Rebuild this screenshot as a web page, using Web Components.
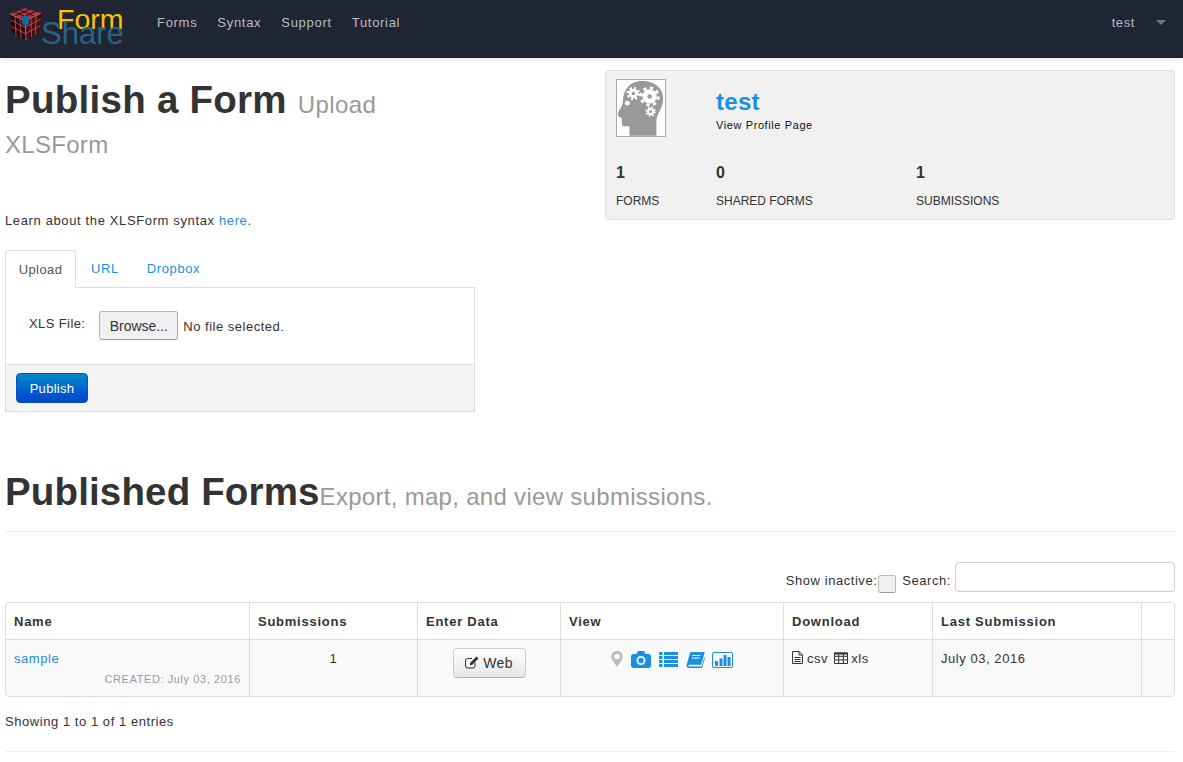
<!DOCTYPE html>
<html><head><meta charset="utf-8"><title>FormShare</title>
<style>
html,body{margin:0;padding:0;background:#fff;overflow:hidden}
body{font:13px/20px "Liberation Sans",Arial,sans-serif;color:#333;letter-spacing:.55px}
</style></head><body>
<fs-app></fs-app>
<script>
const base=`*{box-sizing:border-box}a{color:#1b8fe2;text-decoration:none}`;
function def(name,html){customElements.define(name,class extends HTMLElement{constructor(){super();this.attachShadow({mode:'open'}).innerHTML='<style>'+base+html[0]+'</style>'+html[1];}});}

def('fs-logo',[`:host{display:block;position:relative;width:125px;height:58px}
svg{position:absolute;left:8px;top:6px}
span{position:absolute;font-family:"Liberation Sans",Arial,sans-serif;letter-spacing:0;line-height:30px}
.f{left:57px;top:4px;font-size:28.5px;color:#f5c400}.s{left:41px;top:19px;font-size:31px;color:#2a6285}`,
`<svg width="35" height="36" viewBox="0 0 35 36">
<path d="M2 8 17 2 33 7 17 15Z" fill="#a5353d"/>
<path d="M2 8 17 15 18 34 4 27Z" fill="#2a070c"/>
<path d="M17 15 33 7 32 26 18 34Z" fill="#4a0e14"/>
<path d="M7 6 22 13M12 4 28 11M28 5 12 13M22 3 7 10" fill="none" stroke="#3a0c10" stroke-width="1"/>
<path d="M2.700 14 17.300 21.300 32.700 13M3.300 20.500 17.600 27.700 32.300 19.500M7 10 8 29.500M12 13 13 32M23 12 23.500 31M28 9.500 27.500 28.500" fill="none" stroke="#c4565c" stroke-width=".8"/>
<path d="M2 8 17 15 33 7M17 15 18 34" fill="none" stroke="#e08a8e" stroke-width=".7"/>
<rect x="14" y="10" width="7" height="9" rx="2" fill="#1a6a9c"/></svg>
<span class="f">Form</span><span class="s">Share</span>`]);

def('fs-navbar',[`:host{display:flex;align-items:flex-start;height:58px;background:#1f2533;box-shadow:0 1px 6px rgba(0,0,0,.12);position:relative}
nav{display:flex;gap:20px;margin-left:32px;flex:1;letter-spacing:.7px;padding-top:13px}
a{color:#b9bcc2}
.u{display:flex;align-items:center;gap:21px;margin-right:17px;color:#b9bcc2;letter-spacing:.6px;padding-top:13px}
i{display:block;border:5px solid transparent;border-top-color:#6f7480;border-bottom:0;margin-top:-2px}`,
`<fs-logo></fs-logo><nav><a href="#">Forms</a><a href="#">Syntax</a><a href="#">Support</a><a href="#">Tutorial</a></nav><div class="u"><span>test</span><i></i></div>`]);

def('fs-profile',[`:host{display:block;height:150px;background:#f1f1f1;border:1px solid #ddd;border-radius:4px;padding:8px 10px;margin-top:12px}
.top{display:flex;height:83px}
.av{width:50px;height:58px;background:#fff;border:1px solid #aaa;display:block}
.n{margin-left:50px;padding-top:9px}
.n a{display:block;font-size:24px;font-weight:bold;line-height:28px;letter-spacing:.3px}
.n span{display:block;font-size:11px;line-height:18px;color:#111;letter-spacing:.6px}
.st{display:grid;grid-template-columns:100px 200px 1fr}
b{display:block;font-size:16px;line-height:22px;margin-bottom:7px;letter-spacing:.4px}
small{font-size:12px;line-height:20px;letter-spacing:0;display:block}`,
`<div class="top"><svg class="av" viewBox="0 0 50 58"><path d="M1 34C3 30 6 27 6 22 7 8 15 1 26 1c12 0 22 6 22 19 0 9-6 14-7 22v16H13V48H8c-3 0-3-2-3-5 0-2 0-3-1-4L2 38C1 37 .5 35 1 34z" fill="#999"/>
<g fill="#fff"><circle cx="17" cy="14" r="4.800"/><circle cx="34" cy="17" r="7.500"/><circle cx="35" cy="32.700" r="3.800"/><circle cx="10.700" cy="24" r="2.500"/></g>
<g fill="none" stroke="#fff"><circle cx="17" cy="14" r="5.800" stroke-width="2.400" stroke-dasharray="2.300 2.250"/><circle cx="34" cy="17" r="9" stroke-width="3" stroke-dasharray="3.400 3.670"/><circle cx="35" cy="32.700" r="4.600" stroke-width="1.800" stroke-dasharray="1.800 1.810"/></g>
<g fill="#999"><circle cx="17" cy="14" r="1.800"/><circle cx="34" cy="17" r="2.300"/><circle cx="35" cy="32.700" r="1.600"/></g></svg>
<div class="n"><a href="#">test</a><span>View Profile Page</span></div></div>
<div class="st"><div><b>1</b><small>FORMS</small></div><div><b>0</b><small>SHARED FORMS</small></div><div><b>1</b><small>SUBMISSIONS</small></div></div>`]);

def('fs-upload',[`:host{display:block;width:470px}
.tabs{display:flex;height:38px;border-bottom:1px solid #ddd;letter-spacing:.6px}
.tabs a{padding:9px 12px;height:38px;margin-right:4px;line-height:20px}
.tabs a:first-child{color:#555;background:#fff;border:1px solid #ddd;border-bottom-color:#fff;border-radius:4px 4px 0 0;width:71px;text-align:center;padding:9px 0;margin-right:3px;letter-spacing:.4px}
.p{border:1px solid #ddd;border-top:0}
.f{height:76px;display:flex;align-items:flex-start;padding:23px 0 0 23px}
label{margin:3px 14px 0 0;letter-spacing:.4px}
.br{width:79px;height:29px;background:#f0f0f2;border:1px solid #b5b5b5;border-bottom-color:#999;border-right-color:#aaa;border-radius:3px;font:14px "Liberation Sans",Arial,sans-serif;letter-spacing:0;color:#333;padding:0;margin-right:5px}
.f span{margin-top:6px;letter-spacing:.5px}
.a{height:47px;background:#f5f5f5;border-top:1px solid #ddd;padding:8px 10px}
.pb{width:72px;height:30px;border:1px solid #0055bb;border-radius:4px;background:linear-gradient(#0088cc,#0044cc);color:#fff;font:13px "Liberation Sans",Arial,sans-serif;letter-spacing:.3px;padding:0}`,
`<div class="tabs"><a>Upload</a><a href="#">URL</a><a href="#">Dropbox</a></div>
<div class="p"><div class="f"><label>XLS File:</label><button class="br">Browse...</button><span>No file selected.</span></div><div class="a"><button class="pb">Publish</button></div></div>`]);

const ic={
marker:`<svg width="12" height="16" viewBox="0 0 12 16"><path fill-rule="evenodd" d="M6 0C2.700 0 .3 2.500.3 5.500c0 1.400.4 2.300 1 3.400L6 16l4.700-7.100c.6-1.100 1-2 1-3.400C11.700 2.500 9.300 0 6 0zm0 8.300a2.800 2.800 0 1 1 0-5.600 2.800 2.800 0 0 1 0 5.600z" fill="#bbb"/></svg>`,
cam:`<svg width="20" height="17" viewBox="0 0 20 17"><path fill-rule="evenodd" d="M2.500 3H5.500L6.500 .8C6.700.3 7.200 0 7.700 0h4.600c.5 0 1 .3 1.200.8L14.500 3h3C18.900 3 20 4.100 20 5.500v9c0 1.400-1.100 2.500-2.500 2.500h-15C1.100 17 0 15.900 0 14.500v-9C0 4.100 1.100 3 2.500 3zm7.500 11a4.500 4.500 0 1 0 0-9 4.500 4.500 0 0 0 0 9zm0-1.800a2.700 2.700 0 1 1 0-5.400 2.700 2.700 0 0 1 0 5.400z" fill="#1b8fe2"/></svg>`,
list:`<svg width="19" height="16" viewBox="0 0 19 16" fill="#1b8fe2" style="margin-top:1px"><rect width="3.500" height="3"/><rect x="5" width="14" height="3"/><rect width="3.500" height="3" y="4"/><rect x="5" y="4" width="14" height="3"/><rect width="3.500" height="3" y="8"/><rect x="5" y="8" width="14" height="3"/><rect width="3.500" height="3" y="12"/><rect x="5" y="12" width="14" height="3"/></svg>`,
book:`<svg width="19" height="16" viewBox="0 0 19 16" style="margin-top:1px"><path d="M5.500 0H18c.6 0 .8.400.6 1L15 12.800H3.500C2 12.800 2 14.600 3.500 14.600H15.500L18.300 5.500 19 6 16 16H3C1 16 0 14.500.6 12.700L4 1.300C4.200.5 4.800 0 5.500 0z" fill="#1b8fe2"/><path d="M6.500 3.500h8M5.800 6h8" stroke="#fff" stroke-width="1"/></svg>`,
chart:`<svg width="21" height="16" viewBox="0 0 21 16" style="margin:1px 0 0 -1px"><rect x=".5" y=".5" width="20" height="15" rx="1.500" fill="none" stroke="#1b8fe2"/><g fill="#1b8fe2"><rect x="3" y="9" width="3" height="5"/><rect x="7.500" y="6.500" width="3" height="7.500"/><rect x="11.500" y="3" width="3" height="11"/><rect x="15.500" y="5" width="3" height="9"/></g></svg>`,
file:`<svg width="11" height="13" viewBox="0 0 11 13" style="vertical-align:-1px;margin-right:4px"><path d="M.5.5h6.500l3.500 3.500v8.500H.5zM7 .5V4h3.500M2.500 6.500h6M2.500 8.500h6M2.500 10.500h6" fill="none" stroke="#333"/></svg>`,
grid:`<svg width="14" height="12" viewBox="0 0 14 12" style="vertical-align:-1px;margin:0 3px 0 6px"><path d="M.5 1h13v10.500H.5zM.5 4.300h13M.5 7.900h13M4.700 1v10.500M9.300 1v10.500" fill="none" stroke="#333"/><rect x=".5" y=".5" width="13" height="2" fill="#333"/></svg>`,
edit:`<svg width="14" height="13" viewBox="0 0 14 13" style="vertical-align:-1px;margin-right:4px"><path d="M10 6.500v3.500a2 2 0 0 1-2 2H2.500a2 2 0 0 1-2-2V4.500a2 2 0 0 1 2-2H7" fill="none" stroke="#333"/><path d="M11.500.5 13.500 2.500 7 9H5V7z" fill="#333"/></svg>`};

def('fs-table',[`:host{display:block}
table{width:1170px;border-collapse:separate;border-spacing:0;table-layout:fixed;border:1px solid #ddd;border-radius:4px}
th,td{padding:9px 8px 7px;border-left:1px solid #ddd;vertical-align:top;text-align:left;line-height:20px}
th:first-child,td:first-child{border-left:0}
th{height:37px;font-weight:bold;border-bottom:1px solid #ddd;letter-spacing:.75px}
td{height:56px;background:#f9f9f9}
tr td:first-child{border-bottom-left-radius:4px}tr td:last-child{border-bottom-right-radius:4px}
.cr{display:block;text-align:right;font-size:11px;line-height:16px;color:#999;letter-spacing:.6px;margin-top:2px}
.c{text-align:center}
.web{width:73px;height:30px;background:linear-gradient(#fff,#e6e6e6);border:1px solid #ccc;border-bottom-color:#b3b3b3;border-radius:4px;font:14px "Liberation Sans",Arial,sans-serif;letter-spacing:.3px;color:#333;padding:0}
.v{display:flex;justify-content:center;align-items:flex-start;gap:8px;margin-top:2px}
.v svg{flex:none}
td.w{padding-top:8px}`,
`<table><colgroup><col style="width:243px"><col style="width:168px"><col style="width:143px"><col style="width:223px"><col style="width:149px"><col style="width:209px"><col></colgroup>
<thead><tr><th>Name</th><th>Submissions</th><th>Enter Data</th><th>View</th><th>Download</th><th>Last Submission</th><th></th></tr></thead>
<tbody><tr><td><a href="#">sample</a><span class="cr">CREATED: July 03, 2016</span></td><td class="c">1</td><td class="c w"><button class="web">${ic.edit}Web</button></td>
<td><div class="v">${ic.marker}${ic.cam}${ic.list}${ic.book}${ic.chart}</div></td><td>${ic.file}csv${ic.grid}xls</td><td>July 03, 2016</td><td></td></tr></tbody></table>`]);

def('fs-filter',[`:host{display:flex;justify-content:flex-end;align-items:flex-end;height:30px;margin:30px 0 10px}
.cb{width:18px;height:18px;background:#eeeff1;border:1px solid #bbb;border-bottom-color:#999;border-radius:3px;margin:0 6px -1px 1px}
.s{width:220px;height:30px;border:1px solid #ccc;border-radius:4px;margin-left:4px}
span{margin-bottom:1px;letter-spacing:.55px}`,
`<span>Show inactive:</span><div class="cb"></div><span>Search:</span><input class="s" type="text">`]);

def('fs-app',[`:host{display:block}
main{padding:0 8px 0 5px}
.top{display:grid;grid-template-columns:600px 570px;height:354px}
h1{margin:22px 0 0;width:470px;font-size:38.5px;line-height:40px;font-weight:bold;letter-spacing:.27px}
h1 small,h2 small{font-weight:normal;color:#999;letter-spacing:.3px;font-size:24px;line-height:1}
h1 small em{font-style:normal;letter-spacing:.4px}
h2{margin:60px 0 0;font-size:38.5px;line-height:40px;font-weight:bold;letter-spacing:.15px;padding-bottom:19px;border-bottom:1px solid #eee}
.sh{line-height:20px}
.learn{margin-top:51px;height:20px;letter-spacing:.63px}
hr{border:0;border-top:1px solid #eee;margin:19px 0 0}`,
`<fs-navbar></fs-navbar><main><div class="top"><div><h1>Publish a Form <small><em>Upload</em> XLSForm</small></h1><div class="learn">Learn about the XLSForm syntax <a href="#">here</a>.</div><fs-upload style="margin-top:19px"></fs-upload></div><fs-profile></fs-profile></div>
<h2>Published Forms<small>Export, map, and view submissions.</small></h2><fs-filter></fs-filter><fs-table></fs-table><div class="sh" style="margin-top:15px">Showing 1 to 1 of 1 entries</div><hr></main>`]);
</script>
</body></html>
